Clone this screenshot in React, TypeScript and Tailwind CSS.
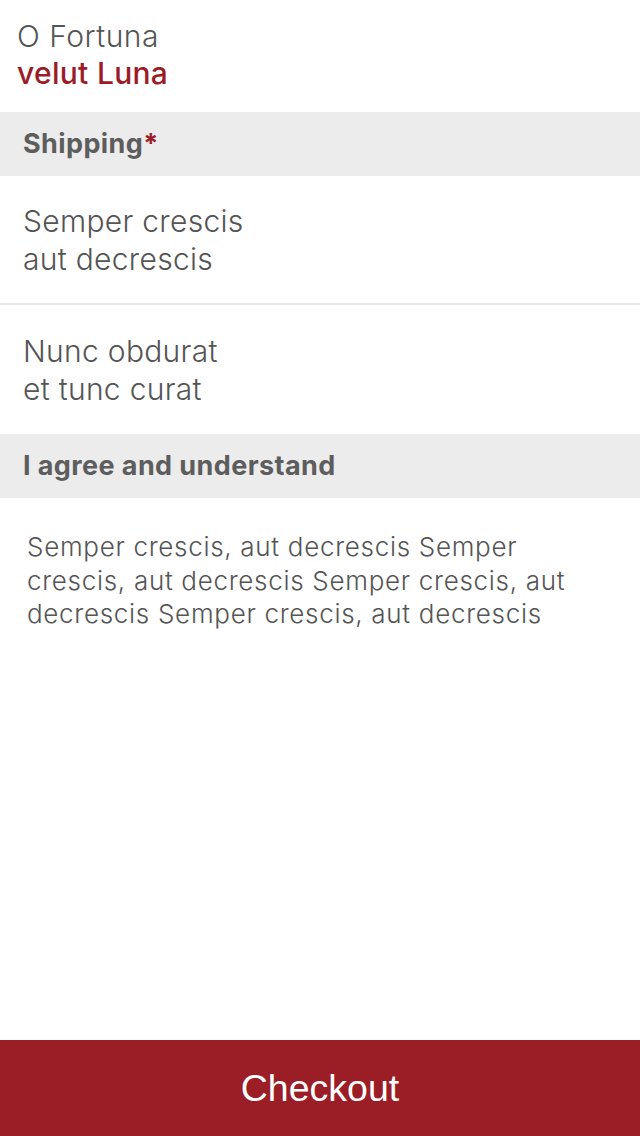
const font = { fontFamily: 'Inter, "Noto Sans", sans-serif' }

const SectionBar = ({ title, required }: { title: string; required?: boolean }) => (
  <div className="h-16 bg-[#ececec] flex items-center px-[23px]">
    <p className="text-[27px] font-bold text-[#5d5d5d] tracking-[0.4px]">
      {title}
      {required && <span className="text-[#9b1c26]">*</span>}
    </p>
  </div>
)

const Option = ({ lines, border }: { lines: string[]; border?: boolean }) => (
  <div className={`h-[129px] flex flex-col justify-center px-[23px] ${border ? 'border-b-2 border-[#e8e8e8]' : ''}`}>
    {lines.map((l) => (
      <p key={l} className="text-[30px] leading-[38px] font-light text-[#555] tracking-[0.3px]">{l}</p>
    ))}
  </div>
)

export default function App() {
  return (
    <div className="w-[640px] h-[1136px] bg-white flex flex-col" style={font}>
      <div className="h-28 px-[17px] pt-[18px]">
        <p className="text-[30px] leading-[37px] font-light text-[#555] tracking-[0.5px]">O Fortuna</p>
        <p className="text-[30px] leading-[37px] font-medium text-[#9b1c26] tracking-[0.3px]">velut Luna</p>
      </div>
      <SectionBar title="Shipping" required />
      <Option lines={['Semper crescis', 'aut decrescis']} border />
      <Option lines={['Nunc obdurat', 'et tunc curat']} />
      <SectionBar title="I agree and understand" />
      <div className="flex-1 pl-[27px] pr-[40px] pt-[32px]">
        <p className="text-[26px] leading-[33.5px] font-light text-[#555] tracking-[0.7px]">
          Semper crescis, aut decrescis Semper crescis, aut decrescis Semper crescis, aut decrescis Semper crescis, aut decrescis
        </p>
      </div>
      <button
        className="h-24 w-full bg-[#9b1e27] text-white text-[37.5px] flex items-center justify-center"
        style={{ fontFamily: '"Liberation Sans", Arial, sans-serif' }}
      >
        Checkout
      </button>
    </div>
  )
}
